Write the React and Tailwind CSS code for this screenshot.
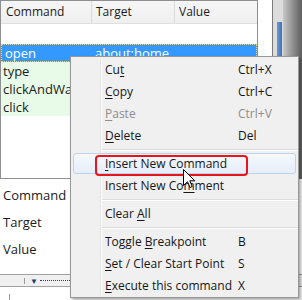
import React from "react";

function U({ children }) {
  return <span className="underline underline-offset-[2px] decoration-[1px]">{children}</span>;
}

function Item({ children, shortcut, disabled, hl }) {
  return (
    <div
      className={
        "relative flex items-center h-[22px] pl-[34px] pr-2 " +
        (disabled ? "text-[#8d8d8d]" : "text-[#161616]")
      }
    >
      {hl && (
        <div className="absolute left-[2px] right-[2px] top-0 bottom-[1px] rounded-[3px] border border-[#bcd3ee] bg-gradient-to-b from-[#f6f9fd] to-[#e6eef9]" />
      )}
      <span className="relative flex-1">{children}</span>
      {shortcut && <span className="relative w-[52px]">{shortcut}</span>}
    </div>
  );
}

function Sep() {
  return (
    <div className="h-[6px] flex flex-col justify-center pl-[31px]">
      <div className="h-[1px] bg-[#dcdcdc]" />
      <div className="h-[1px] bg-white" />
    </div>
  );
}

export default function App() {
  return (
    <div className="relative w-[302px] h-[300px] overflow-hidden bg-white text-[12px] leading-none text-[#1b1b1b] font-['Open_Sans',sans-serif]">
      <div className="flex h-[179px]">
        <div className="w-[258px] h-[179px] border border-[#8e8f8f] flex flex-col overflow-hidden">
          <div className="flex h-[23px] bg-gradient-to-b from-[#f6f6f6] to-[#efefef] border-b border-[#e0e0e0]">
            <div className="w-[91px] flex items-center pl-[5px] border-r border-[#dadada]">Command</div>
            <div className="w-[83px] flex items-center pl-[4px] border-r border-[#dadada]">Target</div>
            <div className="flex-1 flex items-center pl-[4px]">Value</div>
          </div>
          <div className="h-[20px]" />
          <div className="flex h-[18px] bg-[#3399ff] text-white text-[13px] border border-dotted border-[#f3d27a]">
            <div className="w-[91px] flex items-center pl-[3px]">open</div>
            <div className="flex-1 flex items-center pl-[2px]">about:home</div>
          </div>
          <div className="flex h-[18px] bg-[#e8fbe8] text-[13px] items-center pl-[2px]">type</div>
          <div className="flex h-[18px] bg-[#e8fbe8] text-[13px] items-center pl-[2px]">clickAndWait</div>
          <div className="flex h-[18px] bg-[#e8fbe8] text-[13px] items-center pl-[2px]">click</div>
        </div>
        <div className="w-[14px] bg-white" />
        <div className="w-[1px] bg-[#7a7a7a]" />
        <div className="w-[10px] bg-[#dcdcdc] flex flex-col pl-[4px] pr-[1px]">
          <div className="h-[22px]" />
          <div className="flex-1 bg-gradient-to-r from-[#6d97d3] to-[#3e6fb8]" />
        </div>
        <div className="flex-1 bg-gradient-to-r from-[#c9c9c9] to-[#5e5e5e]" />
      </div>
      <div className="flex flex-col pt-[3px] pl-[3px] text-[13px]">
        <div className="h-[27px] flex items-center">Command</div>
        <div className="h-[27px] flex items-center">Target</div>
        <div className="h-[27px] flex items-center">Value</div>
      </div>
      <div className="mt-[11px] border-t border-[#a0a0a0] h-[12px] bg-[#f0f0f0] flex items-center text-[8px] text-[#1e3a6e]">
        <div className="ml-[24px] w-[1px] h-[6px] bg-[#9a9a9a]" />
        <span className="ml-[5px]">▼</span>
        <div className="ml-[2px] w-[34px] border-b border-dotted border-[#2a3f80]" />
      </div>
      <div className="border-t border-[#a0a0a0] h-[20px] flex">
        <div className="ml-[9px] mt-[7px] w-[1px] bg-[#9a9a9a]" />
      </div>

      <div className="absolute left-[70px] top-[56px] w-[229px] h-[242px] bg-[#f0f0f0] border border-[#979797] shadow-[2px_2px_3px_rgba(0,0,0,0.35)] text-[12px] pt-[2px]">
        <div className="absolute left-[29px] top-[2px] bottom-[2px] w-[1px] bg-[#e2e2e2]" />
        <div className="absolute left-[30px] top-[2px] bottom-[2px] w-[1px] bg-white" />
        <Item shortcut="Ctrl+X">Cu<U>t</U></Item>
        <Item shortcut="Ctrl+C"><U>C</U>opy</Item>
        <Item shortcut="Ctrl+V" disabled><U>P</U>aste</Item>
        <Item shortcut="Del"><U>D</U>elete</Item>
        <Sep />
        <Item hl><U>I</U>nsert New Command</Item>
        <Item>Insert New Co<U>m</U>ment</Item>
        <Sep />
        <Item>Clear <U>A</U>ll</Item>
        <Sep />
        <Item shortcut="B">Toggle <U>B</U>reakpoint</Item>
        <Item shortcut="S"><U>S</U>et / Clear Start Point</Item>
        <Item shortcut="X"><U>E</U>xecute this command</Item>
      </div>

      <div className="absolute left-[95px] top-[155px] w-[153px] h-[21px] border-2 border-[#e8161c] rounded-[4px]" />

      <svg className="absolute left-[183px] top-[169px]" width="13" height="20" viewBox="0 0 13 20">
        <path d="M0.5 0.5 L0.5 16.5 L4.5 12.7 L7 18.5 L9.2 17.5 L6.8 11.8 L11.8 11.8 Z" fill="white" stroke="black" strokeWidth="1" />
      </svg>
    </div>
  );
}
